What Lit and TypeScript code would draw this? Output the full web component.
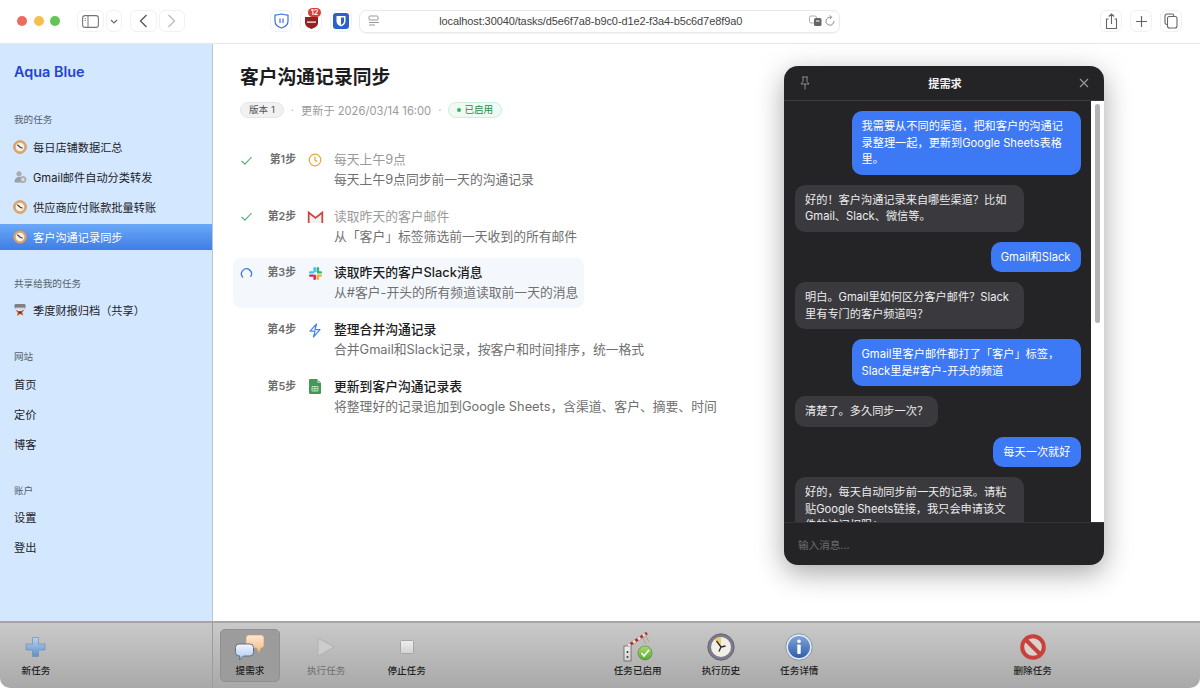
import { LitElement, html, css, svg } from "lit";
import { customElement } from "lit/decorators.js";

const clockIcon = svg`<svg width="14" height="14" viewBox="0 0 14 14">
  <circle cx="7" cy="7" r="6.5" fill="#dfa66f"/>
  <circle cx="7" cy="7" r="6.5" fill="none" stroke="#c88d58" stroke-width=".6"/>
  <circle cx="7" cy="7" r="4.3" fill="#f7f3ea"/>
  <path d="M4.4 4.8 7.2 7.2 9.6 8.2" fill="none" stroke="#4a3a30" stroke-width="1.2"/>
</svg>`;

const gearIcon = svg`<svg width="14" height="14" viewBox="0 0 14 14">
  <circle cx="6" cy="3.8" r="2.6" fill="#a8aeb2"/>
  <path d="M1.5 12c0-3.4 2-5 4.5-5 1.2 0 2 .3 2.6 1v4.5H2z" fill="#9aa0a4"/>
  <circle cx="10" cy="9.6" r="3" fill="#bcc0c2" stroke="#8c9296" stroke-width=".7"/>
  <circle cx="10" cy="9.6" r="1" fill="#eef0f0"/>
</svg>`;

const sharedIcon = svg`<svg width="14" height="14" viewBox="0 0 14 14">
  <rect x="1.5" y="1" width="11" height="4.5" rx="1.2" fill="#7d8082"/>
  <rect x="2.5" y="4.6" width="9" height="1.6" fill="#d8d8d8"/>
  <path d="M2.5 7 7 8.4 11.5 6.6 9.2 9.6 10.4 12.6 7 11 4 13 4.8 9.8z" fill="#c9501f"/>
  <circle cx="7" cy="9.4" r="1.2" fill="#7a2a10"/>
</svg>`;

const checkMark = svg`<svg width="13" height="13" viewBox="0 0 13 13"><path d="M1.5 7 5 10.2 11.5 3" fill="none" stroke="#4caf6d" stroke-width="1.1"/></svg>`;
const spinner = svg`<svg width="13" height="13" viewBox="0 0 13 13"><path d="M2.6 10A5 5 0 1 1 10.8 9.4" fill="none" stroke="#3f78e0" stroke-width="1.3" stroke-linecap="round"/></svg>`;

const stepClock = svg`<svg width="16" height="16" viewBox="0 0 16 16"><circle cx="8" cy="8" r="5.8" fill="none" stroke="#e6a93a" stroke-width="1.2"/><path d="M8 4.6V8.3L10.3 9.4" fill="none" stroke="#e6a93a" stroke-width="1.2"/></svg>`;
const stepGmail = svg`<svg width="17" height="14" viewBox="0 0 17 14">
  <path d="M1 2 8.5 8 16 2V13H1z" fill="#f1f1f1"/>
  <path d="M1.7 13V2.5L8.5 8 15.3 2.5V13" fill="none" stroke="#d0413a" stroke-width="1.7"/>
</svg>`;
const stepSlack = svg`<svg width="15" height="15" viewBox="0 0 15 15">
  <rect x="5.4" y="1" width="2.5" height="5.6" rx="1.25" fill="#36c5f0"/><rect x="1" y="5.2" width="5" height="2.4" rx="1.2" fill="#36c5f0"/>
  <rect x="8.6" y="1" width="2.5" height="5.6" rx="1.25" fill="#2eb67d"/><rect x="9" y="5.2" width="5" height="2.4" rx="1.2" fill="#2eb67d"/>
  <rect x="8.6" y="8.4" width="2.5" height="5.6" rx="1.25" fill="#ecb22e"/><rect x="9" y="8.4" width="5" height="2.4" rx="1.2" fill="#ecb22e"/>
  <rect x="5.4" y="8.4" width="2.5" height="5.6" rx="1.25" fill="#e01e5a"/><rect x="1" y="8.4" width="5" height="2.4" rx="1.2" fill="#e01e5a"/>
</svg>`;
const stepBolt = svg`<svg width="14" height="15" viewBox="0 0 14 15"><path d="M8.6 1 2 8.2H7L5.4 14 12 6.6H7z" fill="none" stroke="#4a80e8" stroke-width="1.2" stroke-linejoin="round"/></svg>`;
const stepSheets = svg`<svg width="12" height="15" viewBox="0 0 12 15">
  <path d="M1.2 0H8L12 4V13.8A1.2 1.2 0 0 1 10.8 15H1.2A1.2 1.2 0 0 1 0 13.8V1.2A1.2 1.2 0 0 1 1.2 0z" fill="#3f9a55"/>
  <path d="M8 0 12 4H8z" fill="#8cc79b"/>
  <path d="M3 7.5H9V12H3zM3 9.7H9M6 7.5V12" fill="none" stroke="#d6ecd9" stroke-width=".8"/>
</svg>`;

const plusIcon = svg`<svg width="24" height="24" viewBox="0 0 24 24">
  <path d="M8.5 2.5H14.5V9H21V15H14.5V21.5H8.5V15H2V9H8.5z" fill="url(#plusFill)" stroke="#6f8fb0" stroke-width=".7"/>
</svg>`;
const chatIcon = svg`<svg width="30" height="27" viewBox="0 0 30 27">
  <path d="M14 1H26A3 3 0 0 1 29 4V11A3 3 0 0 1 26 14L24 19 21.5 14H14A3 3 0 0 1 11 11V4A3 3 0 0 1 14 1z" fill="url(#peach)" stroke="#c89a6e" stroke-width=".6"/>
  <path d="M4 10H15A3.5 3.5 0 0 1 18.5 13.500V18.500A3.500 3.500 0 0 1 15 22H8.500L4.500 26 5 22H4A3.500 3.500 0 0 1 .5 18.500V13.500A3.500 3.500 0 0 1 4 10z" fill="url(#sky)" stroke="#5a6878" stroke-width=".9"/>
</svg>`;
const playIcon = svg`<svg width="18" height="20" viewBox="0 0 18 20"><path d="M1 1 17 10 1 19z" fill="#cdcdcd" stroke="#b2b2b2"/></svg>`;
const stopIcon = svg`<svg width="14" height="14" viewBox="0 0 14 14"><rect x=".5" y=".5" width="13" height="13" rx="1" fill="url(#stopFill)" stroke="#a6a6a6"/></svg>`;
const gateIcon = svg`<svg width="32" height="30" viewBox="0 0 32 30">
  <rect x="2" y="14" width="7" height="15" fill="url(#stopFill)" stroke="#555" stroke-width=".7"/>
  <circle cx="5.500" cy="20" r="1" fill="#333"/><circle cx="5.500" cy="25" r="1" fill="#333"/>
  <path d="M6 14 25 1" stroke="#a33c2e" stroke-width="3"/>
  <path d="M6 14 25 1" stroke="#e8e0d8" stroke-width="3" stroke-dasharray="3 3"/>
  <path d="M20 4 24 12M23 2 27 10" stroke="#b06a5a" stroke-width=".6" opacity=".7"/>
  <circle cx="23" cy="21" r="7" fill="url(#greenFill)" stroke="#4e8f34" stroke-width=".7"/>
  <path d="M19.500 21 22 24 27 18" fill="none" stroke="#fff" stroke-width="1.6"/>
</svg>`;
const historyIcon = svg`<svg width="28" height="28" viewBox="0 0 28 28">
  <circle cx="14" cy="14" r="13.200" fill="#7d7a8c"/>
  <circle cx="14" cy="14" r="13.200" fill="none" stroke="#5b5a6c" stroke-width=".8"/>
  <circle cx="14" cy="14" r="10" fill="#f2efe6"/>
  <path d="M14 14 7.500 6.500A10 10 0 0 1 14 4z" fill="#e9cf6b"/>
  <path d="M14 14 9.500 8M14 14 12 18.500M14 14 18.500 13" fill="none" stroke="#2a2a2a" stroke-width="1.300"/>
</svg>`;
const infoIcon = svg`<svg width="28" height="28" viewBox="0 0 28 28">
  <circle cx="14" cy="14" r="13.200" fill="#e6ecf5" stroke="#6f86a8" stroke-width=".8"/>
  <circle cx="14" cy="14" r="11" fill="url(#infoFill)"/>
  <circle cx="14" cy="8.200" r="1.800" fill="#fff"/>
  <rect x="12.300" y="11.500" width="3.400" height="9.500" rx=".8" fill="#fff"/>
</svg>`;
const noIcon = svg`<svg width="28" height="28" viewBox="0 0 28 28">
  <circle cx="14" cy="14" r="10.800" fill="#d9d2d0" stroke="#c9413a" stroke-width="4"/>
  <path d="M6.500 6.500 21.500 21.500" stroke="#c9413a" stroke-width="4"/>
</svg>`;

const tasks = [
  { icon: clockIcon, label: "每日店铺数据汇总" },
  { icon: gearIcon, label: "Gmail邮件自动分类转发" },
  { icon: clockIcon, label: "供应商应付账款批量转账" },
  { icon: clockIcon, label: "客户沟通记录同步", active: true },
];

const steps = [
  { state: "done", no: "第1步", icon: stepClock, title: "每天上午9点", desc: "每天上午9点同步前一天的沟通记录" },
  { state: "done", no: "第2步", icon: stepGmail, title: "读取昨天的客户邮件", desc: "从「客户」标签筛选前一天收到的所有邮件" },
  { state: "running", no: "第3步", icon: stepSlack, title: "读取昨天的客户Slack消息", desc: "从#客户-开头的所有频道读取前一天的消息" },
  { state: "todo", no: "第4步", icon: stepBolt, title: "整理合并沟通记录", desc: "合并Gmail和Slack记录，按客户和时间排序，统一格式" },
  { state: "todo", no: "第5步", icon: stepSheets, title: "更新到客户沟通记录表", desc: "将整理好的记录追加到Google Sheets，含渠道、客户、摘要、时间" },
];

const messages = [
  { me: true, text: "我需要从不同的渠道，把和客户的沟通记录整理一起，更新到Google Sheets表格里。" },
  { me: false, text: "好的！客户沟通记录来自哪些渠道？比如Gmail、Slack、微信等。" },
  { me: true, text: "Gmail和Slack" },
  { me: false, text: "明白。Gmail里如何区分客户邮件？Slack里有专门的客户频道吗？" },
  { me: true, text: "Gmail里客户邮件都打了「客户」标签，Slack里是#客户-开头的频道" },
  { me: false, text: "清楚了。多久同步一次？" },
  { me: true, text: "每天一次就好" },
  { me: false, text: "好的，每天自动同步前一天的记录。请粘贴Google Sheets链接，我只会申请该文件的访问权限；" },
];

@customElement("app-root")
export class AppRoot extends LitElement {
  static styles = css`
    :host {
      display: block;
      font-family: Inter, "Noto Sans CJK SC", sans-serif;
      color: #222;
    }
    .window {
      position: relative;
      width: 1200px;
      height: 688px;
      display: flex;
      flex-direction: column;
      overflow: hidden;
      background: #fff;
      border-radius: 0 0 10px 10px;
    }

    .topbar {
      flex: 0 0 44px;
      box-sizing: border-box;
      display: flex;
      align-items: center;
      padding: 0 10px 1px 17px;
      border-bottom: 1px solid #e6e6e6;
      background: #fff;
    }
    .lights { display: flex; gap: 6.500px; margin-right: 17px; }
    .lights i { width: 10px; height: 10px; border-radius: 50%; display: block; }
    .tool {
      height: 22px;
      box-sizing: border-box;
      display: flex;
      align-items: center;
      justify-content: center;
      border: 1px solid #f1f1f1;
      border-radius: 6px;
      margin-right: 2px;
      color: #666;
    }
    .tool svg { display: block; }
    .w27 { width: 27px; }
    .w16 { width: 16px; margin-right: 7px; }
    .w22 { width: 22px; margin-right: 8px; }
    .gap-ext { margin-left: 83px; }
    .badge {
      position: absolute;
      top: -3px;
      left: 7px;
      background: #e0393a;
      color: #fff;
      font-size: 7.500px;
      line-height: 9px;
      padding: 0 2.500px;
      border-radius: 5px;
      font-weight: 600;
    }
    .rel { position: relative; }
    .url {
      width: 485px;
      height: 23px;
      box-sizing: border-box;
      margin-left: 0;
      margin-right: 260px;
      border: 1px solid #e9e9e9;
      border-radius: 7px;
      display: flex;
      align-items: center;
      padding: 0 4px 0 8px;
      box-shadow: 0 1px 1px rgba(0, 0, 0, 0.04);
    }
    .url span {
      flex: 1;
      text-align: center;
      font-size: 11px;
      color: #444;
      letter-spacing: -0.1px;
      padding-right: 8px;
      font-family: "Liberation Sans", sans-serif;
    }
    .url .right { display: flex; gap: 3px; align-items: center; }

    .middle { flex: 1; display: flex; min-height: 0; }
    .sidebar {
      flex: 0 0 213px;
      box-sizing: border-box;
      background: #d3e8fe;
      border-right: 1px solid #b9c6d3;
      padding-top: 18px;
    }
    .brand {
      font-size: 14.400px;
      font-weight: 600;
      line-height: 20px;
      color: #2344d0;
      padding-left: 14px;
      margin-bottom: 31px;
    }
    .section { margin-bottom: 26.500px; }
    .section-label {
      font-size: 9.600px;
      line-height: 14px;
      color: #55606c;
      padding-left: 14px;
      margin-bottom: 6.500px;
    }
    .nav-item {
      height: 26.500px;
      margin-bottom: 3.500px;
      display: flex;
      align-items: center;
      gap: 6px;
      padding-left: 13px;
      font-size: 11.200px;
      color: #1e2228;
    }
    .nav-item svg { display: block; }
    .nav-item.active {
      background: linear-gradient(#6aa9f8, #3f7ee4);
      color: #fff;
    }
    .nav-item.plain { padding-left: 14px; }

    .main { flex: 1; padding: 21px 27px 0; min-width: 0; }
    h1 {
      margin: 0;
      font-size: 18.800px;
      line-height: 26px;
      font-weight: 600;
      color: #1c1c1e;
    }
    .meta {
      display: flex;
      align-items: center;
      height: 16px;
      margin-top: 11px;
      font-size: 11.200px;
      color: #9a9a9a;
    }
    .pill {
      font-size: 9.600px;
      line-height: 14px;
      padding: 0 8px;
      border-radius: 8px;
      border: 1px solid #e6e6e6;
      background: #f1f1f1;
      color: #555;
    }
    .sep { margin: 0 7px; color: #bbb; }
    .status {
      display: flex;
      align-items: center;
      gap: 3px;
      font-size: 9.600px;
      line-height: 14px;
      padding: 0 8px;
      border-radius: 8px;
      border: 1px solid #cdeed8;
      background: #eefaf2;
      color: #2c8a4e;
    }
    .status i { width: 4px; height: 4px; border-radius: 50%; background: #38b060; }

    .steps {
      display: flex;
      flex-direction: column;
      gap: 6.700px;
      margin: 27px 0 0 -7px;
    }
    .step {
      width: fit-content;
      height: 50px;
      box-sizing: border-box;
      display: flex;
      padding: 5px 6px 5px 7px;
      border-radius: 8px;
    }
    .step.running { background: #f4f8fd; }
    .indicator { flex: 0 0 13px; height: 20px; display: flex; align-items: center; }
    .no {
      flex: 0 0 32px;
      margin-left: 11px;
      text-align: right;
      font-size: 10.800px;
      line-height: 20px;
      font-weight: 600;
      color: #6d6d6d;
      white-space: nowrap;
    }
    .icon {
      flex: 0 0 22px;
      margin: 0 8px;
      height: 20px;
      display: flex;
      align-items: center;
      justify-content: center;
    }
    .title { font-size: 12.800px; line-height: 20px; color: #1c1c1e; font-weight: 500; }
    .step.done .title { color: #9a9a9a; font-weight: 400; }
    .desc { font-size: 12.800px; line-height: 20px; color: #6f6f6f; white-space: nowrap; }

    .bottom {
      flex: 0 0 67px;
      box-sizing: border-box;
      display: flex;
      background: linear-gradient(#c9c9c9, #a9a9a9);
      border-top: 2px solid #a6a6a6;
    }
    .bottom-left {
      flex: 0 0 213px;
      box-sizing: border-box;
      border-right: 1px solid #9c9c9c;
      padding-left: 6px;
    }
    .bottom-right { flex: 1; display: flex; padding-left: 7px; }
    .group { display: flex; gap: 14px; }
    .group.mid { margin-left: 162px; }
    .group.end { margin-left: 169px; }
    .tb {
      min-width: 60px;
      height: 53px;
      margin-top: 6px;
      box-sizing: border-box;
      padding: 0 12px 3px;
      display: flex;
      flex-direction: column;
      align-items: center;
      justify-content: flex-end;
      border: 1px solid transparent;
      border-radius: 5px;
      font-size: 9.600px;
      line-height: 14px;
      font-weight: 500;
      color: #1f1f1f;
      white-space: nowrap;
    }
    .tb .ic { flex: 1; display: flex; align-items: center; justify-content: center; }
    .tb svg { display: block; }
    .tb.on { background: #9c9c9c; border-color: #8f8f8f; }
    .tb.off { color: #6e6e6e; font-weight: 400; }
    .tb.stop { margin-left: 2px; }

    .chat {
      position: absolute;
      left: 784px;
      top: 66px;
      width: 320px;
      height: 499px;
      display: flex;
      flex-direction: column;
      background: #242426;
      border-radius: 14px;
      overflow: hidden;
      box-shadow: 0 8px 28px rgba(0, 0, 0, 0.35);
    }
    .chat-head {
      flex: 0 0 34.500px;
      box-sizing: border-box;
      display: flex;
      align-items: center;
      justify-content: space-between;
      padding: 0 15px;
      border-bottom: 1px solid #3a3a40;
      color: #f2f2f2;
      font-size: 11.200px;
      font-weight: 600;
    }
    .chat-head svg { display: block; }
    .chat-body { flex: 1; min-height: 0; display: flex; }
    .messages {
      flex: 1;
      min-width: 0;
      overflow: hidden;
      display: flex;
      flex-direction: column;
      gap: 10px;
      padding: 10.500px 10px 0 11px;
    }
    .bubble {
      flex: none;
      max-width: 229px;
      box-sizing: border-box;
      padding: 7px 10px;
      border-radius: 10px;
      font-size: 11.200px;
      line-height: 16.500px;
      color: #ececec;
      background: #3a3a3e;
      align-self: flex-start;
    }
    .bubble.me { align-self: flex-end; background: #3d78f5; color: #fff; }
    .scroll {
      flex: 0 0 13px;
      box-sizing: border-box;
      background: #fff;
      padding: 3px 4px 0;
    }
    .scroll i { display: block; width: 5.500px; height: 219px; border-radius: 3px; background: #b4b4b4; }
    .composer {
      flex: 0 0 43px;
      box-sizing: border-box;
      display: flex;
      align-items: center;
      padding: 0 14px;
      border-top: 1px solid #333338;
      color: #6c6c6e;
      font-size: 10.600px;
    }
  `;

  render() {
    return html`
      <div class="window">
        <svg width="0" height="0" style="position:absolute">
          <defs>
            <linearGradient id="plusFill" x1="0" y1="0" x2="0" y2="1"><stop offset="0" stop-color="#b9d2ee"/><stop offset="1" stop-color="#5f8fc8"/></linearGradient>
            <linearGradient id="peach" x1="0" y1="0" x2="0" y2="1"><stop offset="0" stop-color="#fde9d2"/><stop offset="1" stop-color="#f3b884"/></linearGradient>
            <linearGradient id="sky" x1="0" y1="0" x2="0" y2="1"><stop offset="0" stop-color="#f2f7ff"/><stop offset="1" stop-color="#a9c6f2"/></linearGradient>
            <linearGradient id="stopFill" x1="0" y1="0" x2="0" y2="1"><stop offset="0" stop-color="#eeeeee"/><stop offset="1" stop-color="#d2d2d2"/></linearGradient>
            <linearGradient id="greenFill" x1="0" y1="0" x2="0" y2="1"><stop offset="0" stop-color="#a8dc6c"/><stop offset="1" stop-color="#5aa838"/></linearGradient>
            <linearGradient id="infoFill" x1="0" y1="0" x2="0" y2="1"><stop offset="0" stop-color="#7fa4d8"/><stop offset="1" stop-color="#2f5fa8"/></linearGradient>
          </defs>
        </svg>
        ${this.renderTopbar()}
        <div class="middle">
          ${this.renderSidebar()}
          ${this.renderMain()}
        </div>
        ${this.renderBottom()}
        ${this.renderChat()}
      </div>
    `;
  }

  renderTopbar() {
    return html`
      <div class="topbar">
        <div class="lights">
          <i style="background:#ed6a5e"></i><i style="background:#f5bf4f"></i><i style="background:#62c554"></i>
        </div>
        <div class="tool w27"><svg width="17" height="13" viewBox="0 0 17 13"><rect x=".6" y=".6" width="15.800" height="11.800" rx="2.500" fill="none" stroke="#777" stroke-width="1.100"/><path d="M6 1V12" stroke="#777"/><path d="M2.500 3.500H4M2.500 5.500H4" stroke="#999"/></svg></div>
        <div class="tool w16" style="margin-right:8px"><svg width="8" height="5" viewBox="0 0 8 5"><path d="M1 1 4 4 7 1" fill="none" stroke="#666" stroke-width="1.100"/></svg></div>
        <div class="tool w27"><svg width="9" height="14" viewBox="0 0 9 14"><path d="M7.500 1 1.500 7 7.500 13" fill="none" stroke="#555" stroke-width="1.300"/></svg></div>
        <div class="tool w27"><svg width="9" height="14" viewBox="0 0 9 14"><path d="M1.500 1 7.500 7 1.500 13" fill="none" stroke="#bbb" stroke-width="1.300"/></svg></div>

        <div class="tool w22 gap-ext"><svg width="15" height="16" viewBox="0 0 15 16"><path d="M1 2.200C3 2 5.500 1.500 7.500 1 9.500 1.500 12 2 14 2.200V8C14 11.500 11 14 7.500 15 4 14 1 11.500 1 8z" fill="#fff" stroke="#3a6fdc" stroke-width="1.200"/><path d="M6 5.500V10M9 5.500V10" stroke="#3a6fdc" stroke-width="1.200"/></svg></div>
        <div class="tool w22 rel"><svg width="15" height="15" viewBox="0 0 15 15"><path d="M1 3H14V9C14 12 10.500 14 7.500 15 4.500 14 1 12 1 9z" fill="#8e2320"/><rect x="3" y="7.500" width="9" height="1.200" fill="#fff"/></svg><span class="badge">12</span></div>
        <div class="tool w22" style="margin-right:7px"><svg width="16" height="16" viewBox="0 0 16 16"><rect width="16" height="16" rx="3" fill="#2a62c9"/><path d="M3.500 3H12.500V8.500C12.500 11 10 12.700 8 13.500 6 12.700 3.500 11 3.500 8.500z" fill="#fff"/><path d="M8 4.500H11V8.500C11 10 9.300 11.200 8 11.900z" fill="#2a62c9"/></svg></div>

        <div class="url">
          <svg width="12" height="12" viewBox="0 0 12 12"><rect x="1" y="1" width="9" height="4" rx="1" fill="none" stroke="#999"/><path d="M1 7.500H11M1 10H7" stroke="#999"/></svg>
          <span>localhost:30040/tasks/d5e6f7a8-b9c0-d1e2-f3a4-b5c6d7e8f9a0</span>
          <div class="right">
            <svg width="13" height="12" viewBox="0 0 13 12"><rect x=".5" y="1" width="7" height="7" rx="1.500" fill="none" stroke="#999" stroke-width=".8"/><rect x="5" y="3" width="7.500" height="8" rx="1.500" fill="#666"/><path d="M7 6H10.500" stroke="#fff"/></svg>
            <svg width="10" height="12" viewBox="0 0 10 12"><path d="M6 2.300A4 4 0 1 0 9 6" fill="none" stroke="#888"/><path d="M4.800 .3 6.800 2.300 4.800 4" fill="none" stroke="#888"/></svg>
          </div>
        </div>

        <div class="tool w22"><svg width="13" height="17" viewBox="0 0 13 17"><path d="M3.500 6H1.500V15.500H11.500V6H9.500M6.500 11V1M3.800 3.500 6.500 1 9.200 3.500" fill="none" stroke="#666" stroke-width="1.100"/></svg></div>
        <div class="tool w22"><svg width="13" height="13" viewBox="0 0 13 13"><path d="M6.500 1V12M1 6.500H12" stroke="#666" stroke-width="1.200"/></svg></div>
        <div class="tool w22"><svg width="14" height="16" viewBox="0 0 14 16"><rect x="3.500" y="3.500" width="9.500" height="11.500" rx="2" fill="none" stroke="#666" stroke-width="1.100"/><path d="M3 11.500H2.800A1.800 1.800 0 0 1 1 9.700V2.800A1.800 1.800 0 0 1 2.800 1H8A1.800 1.800 0 0 1 9.800 2.800V3" fill="none" stroke="#666" stroke-width="1.100"/></svg></div>
      </div>
    `;
  }

  renderSidebar() {
    return html`
      <aside class="sidebar">
        <div class="brand">Aqua Blue</div>
        <div class="section">
          <div class="section-label">我的任务</div>
          ${tasks.map((t) => html`<div class="nav-item ${t.active ? "active" : ""}">${t.icon}<span>${t.label}</span></div>`)}
        </div>
        <div class="section">
          <div class="section-label">共享给我的任务</div>
          <div class="nav-item">${sharedIcon}<span>季度财报归档（共享）</span></div>
        </div>
        <div class="section">
          <div class="section-label">网站</div>
          <div class="nav-item plain">首页</div>
          <div class="nav-item plain">定价</div>
          <div class="nav-item plain">博客</div>
        </div>
        <div class="section">
          <div class="section-label">账户</div>
          <div class="nav-item plain">设置</div>
          <div class="nav-item plain">登出</div>
        </div>
      </aside>
    `;
  }

  renderMain() {
    return html`
      <main class="main">
        <h1>客户沟通记录同步</h1>
        <div class="meta">
          <span class="pill">版本 1</span>
          <span class="sep">·</span>
          <span>更新于 2026/03/14 16:00</span>
          <span class="sep">·</span>
          <span class="status"><i></i>已启用</span>
        </div>
        <div class="steps">
          ${steps.map((s) => html`
            <div class="step ${s.state}">
              <div class="indicator">${s.state === "done" ? checkMark : s.state === "running" ? spinner : ""}</div>
              <div class="no">${s.no}</div>
              <div class="icon">${s.icon}</div>
              <div>
                <div class="title">${s.title}</div>
                <div class="desc">${s.desc}</div>
              </div>
            </div>
          `)}
        </div>
      </main>
    `;
  }

  renderBottom() {
    return html`
      <footer class="bottom">
        <div class="bottom-left">
          <div class="tb" style="display:inline-flex">
            <div class="ic">${plusIcon}</div><span>新任务</span>
          </div>
        </div>
        <div class="bottom-right">
          <div class="group">
            <div class="tb on"><div class="ic">${chatIcon}</div><span>提需求</span></div>
            <div class="tb off"><div class="ic">${playIcon}</div><span>执行任务</span></div>
            <div class="tb stop"><div class="ic">${stopIcon}</div><span>停止任务</span></div>
          </div>
          <div class="group mid">
            <div class="tb"><div class="ic">${gateIcon}</div><span>任务已启用</span></div>
            <div class="tb"><div class="ic">${historyIcon}</div><span>执行历史</span></div>
            <div class="tb"><div class="ic">${infoIcon}</div><span>任务详情</span></div>
          </div>
          <div class="group end">
            <div class="tb"><div class="ic">${noIcon}</div><span>删除任务</span></div>
          </div>
        </div>
      </footer>
    `;
  }

  renderChat() {
    return html`
      <section class="chat">
        <header class="chat-head">
          <svg width="12" height="14" viewBox="0 0 12 14"><path d="M3 1H9M4 1V5.500L2 8H10L8 5.500V1M6 8V13.500" fill="none" stroke="#8a8a8c" stroke-width="1"/></svg>
          <span>提需求</span>
          <svg width="10" height="10" viewBox="0 0 10 10"><path d="M1 1 9 9M9 1 1 9" stroke="#9a9a9c" stroke-width="1.100"/></svg>
        </header>
        <div class="chat-body">
          <div class="messages">
            ${messages.map((m) => html`<div class="bubble ${m.me ? "me" : ""}">${m.text}</div>`)}
          </div>
          <div class="scroll"><i></i></div>
        </div>
        <div class="composer">输入消息...</div>
      </section>
    `;
  }
}
